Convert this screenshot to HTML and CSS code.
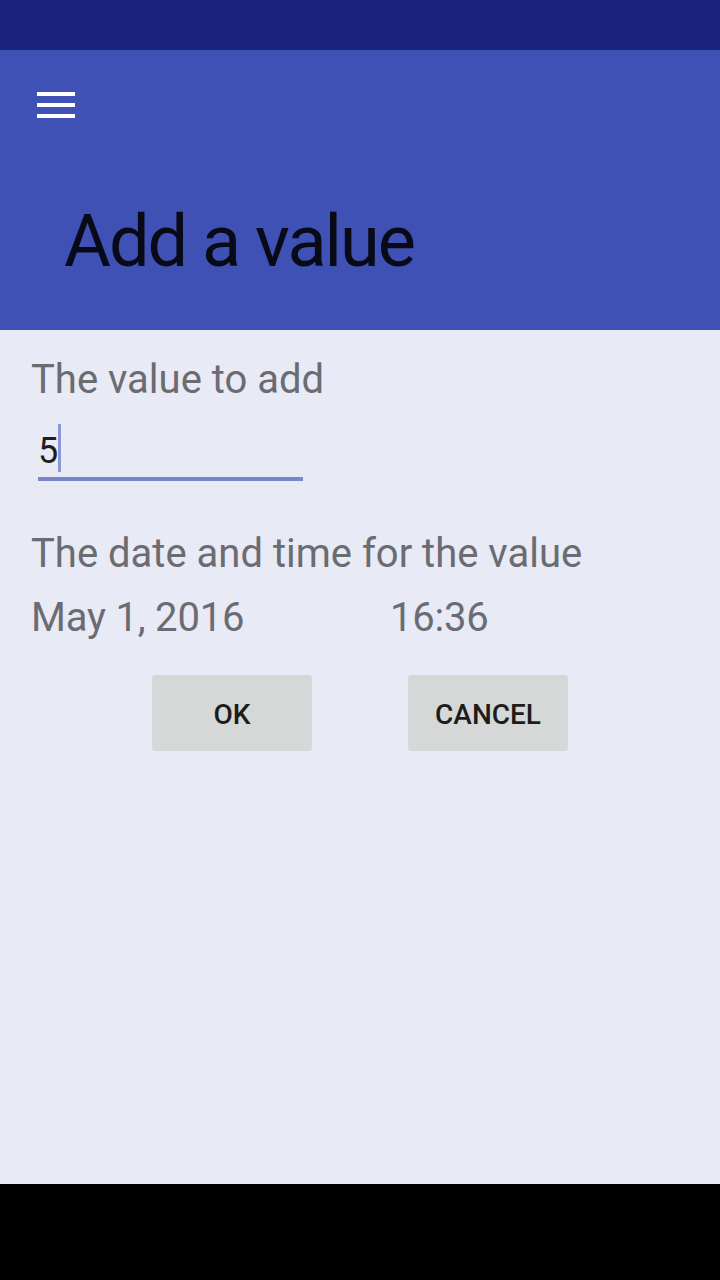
FILE: index.html
```html
<!DOCTYPE html>
<html lang="en">
<head>
<meta charset="utf-8">
<title>Add a value</title>
<link rel="stylesheet" href="styles.css">
</head>
<body>
<div class="screen">
  <div class="status-bar"></div>
  <header class="toolbar">
    <svg class="menu-icon" width="38" height="26" viewBox="0 0 38 26" aria-hidden="true">
      <rect x="0" y="0" width="38" height="4" fill="#ffffff"/>
      <rect x="0" y="11" width="38" height="4" fill="#ffffff"/>
      <rect x="0" y="22" width="38" height="4" fill="#ffffff"/>
    </svg>
    <h1 class="title">Add a value</h1>
  </header>
  <main class="content">
    <div class="label">The value to add</div>
    <div class="field">
      <span class="digit">5</span>
      <span class="cursor"></span>
    </div>
    <div class="label label-date">The date and time for the value</div>
    <div class="datetime">
      <span class="date">May 1, 2016</span>
      <span class="time">16:36</span>
    </div>
    <div class="actions">
      <button class="btn">OK</button>
      <button class="btn">CANCEL</button>
    </div>
  </main>
  <div class="nav-bar"></div>
</div>
</body>
</html>
```
FILE: styles.css
```css
* { box-sizing: border-box; }
html, body { margin: 0; padding: 0; }
body {
  width: 720px;
  height: 1280px;
  font-family: Roboto, "Noto Sans", "Liberation Sans", sans-serif;
  background: #e8eaf6;
}
.screen {
  display: flex;
  flex-direction: column;
  height: 1280px;
}
.status-bar {
  height: 50px;
  background: #1a237e;
  flex: none;
}
.toolbar {
  height: 280px;
  flex: none;
  background: #3f51b5;
  padding: 42px 0 0 0;
  display: flex;
  flex-direction: column;
  align-items: flex-start;
}
.menu-icon {
  display: block;
  margin-left: 37px;
}
.title {
  margin: 82px 0 0 64px;
  font-size: 72px;
  line-height: 84px;
  font-weight: 400;
  letter-spacing: -2px;
  color: #080a17;
}
.content {
  flex: 1;
  background: #e8eaf6;
  padding: 26px 0 0 31px;
  display: flex;
  flex-direction: column;
  align-items: flex-start;
}
.label {
  font-size: 40px;
  line-height: 48px;
  color: #6b6c71;
}
.field {
  margin: 20px 0 0 7px;
  width: 265px;
  height: 57px;
  border-bottom: 4px solid #7986cb;
  display: flex;
  align-items: flex-start;
  padding-left: 0;
}
.digit {
  font-size: 36px;
  line-height: 36px;
  margin-top: 9px;
  color: #1e1e20;
}
.cursor {
  width: 3px;
  height: 48px;
  background: #8c97d6;
}
.label-date {
  margin-top: 49px;
}
.datetime {
  margin-top: 16px;
  display: grid;
  grid-template-columns: 359px auto;
  font-size: 40px;
  line-height: 48px;
  color: #6b6c71;
  letter-spacing: -0.2px;
}
.actions {
  margin-top: 33px;
  align-self: stretch;
  margin-left: -31px;
  display: flex;
  justify-content: center;
  gap: 96px;
}
.btn {
  width: 160px;
  height: 76px;
  border: none;
  border-radius: 3px;
  background: #d6d7d7;
  font-family: Roboto, "Noto Sans", "Liberation Sans", sans-serif;
  font-size: 28px;
  font-weight: 500;
  color: #1c1c1c;
  padding: 3px 0 0 0;
}
.nav-bar {
  height: 96px;
  flex: none;
  background: #000000;
}
```
